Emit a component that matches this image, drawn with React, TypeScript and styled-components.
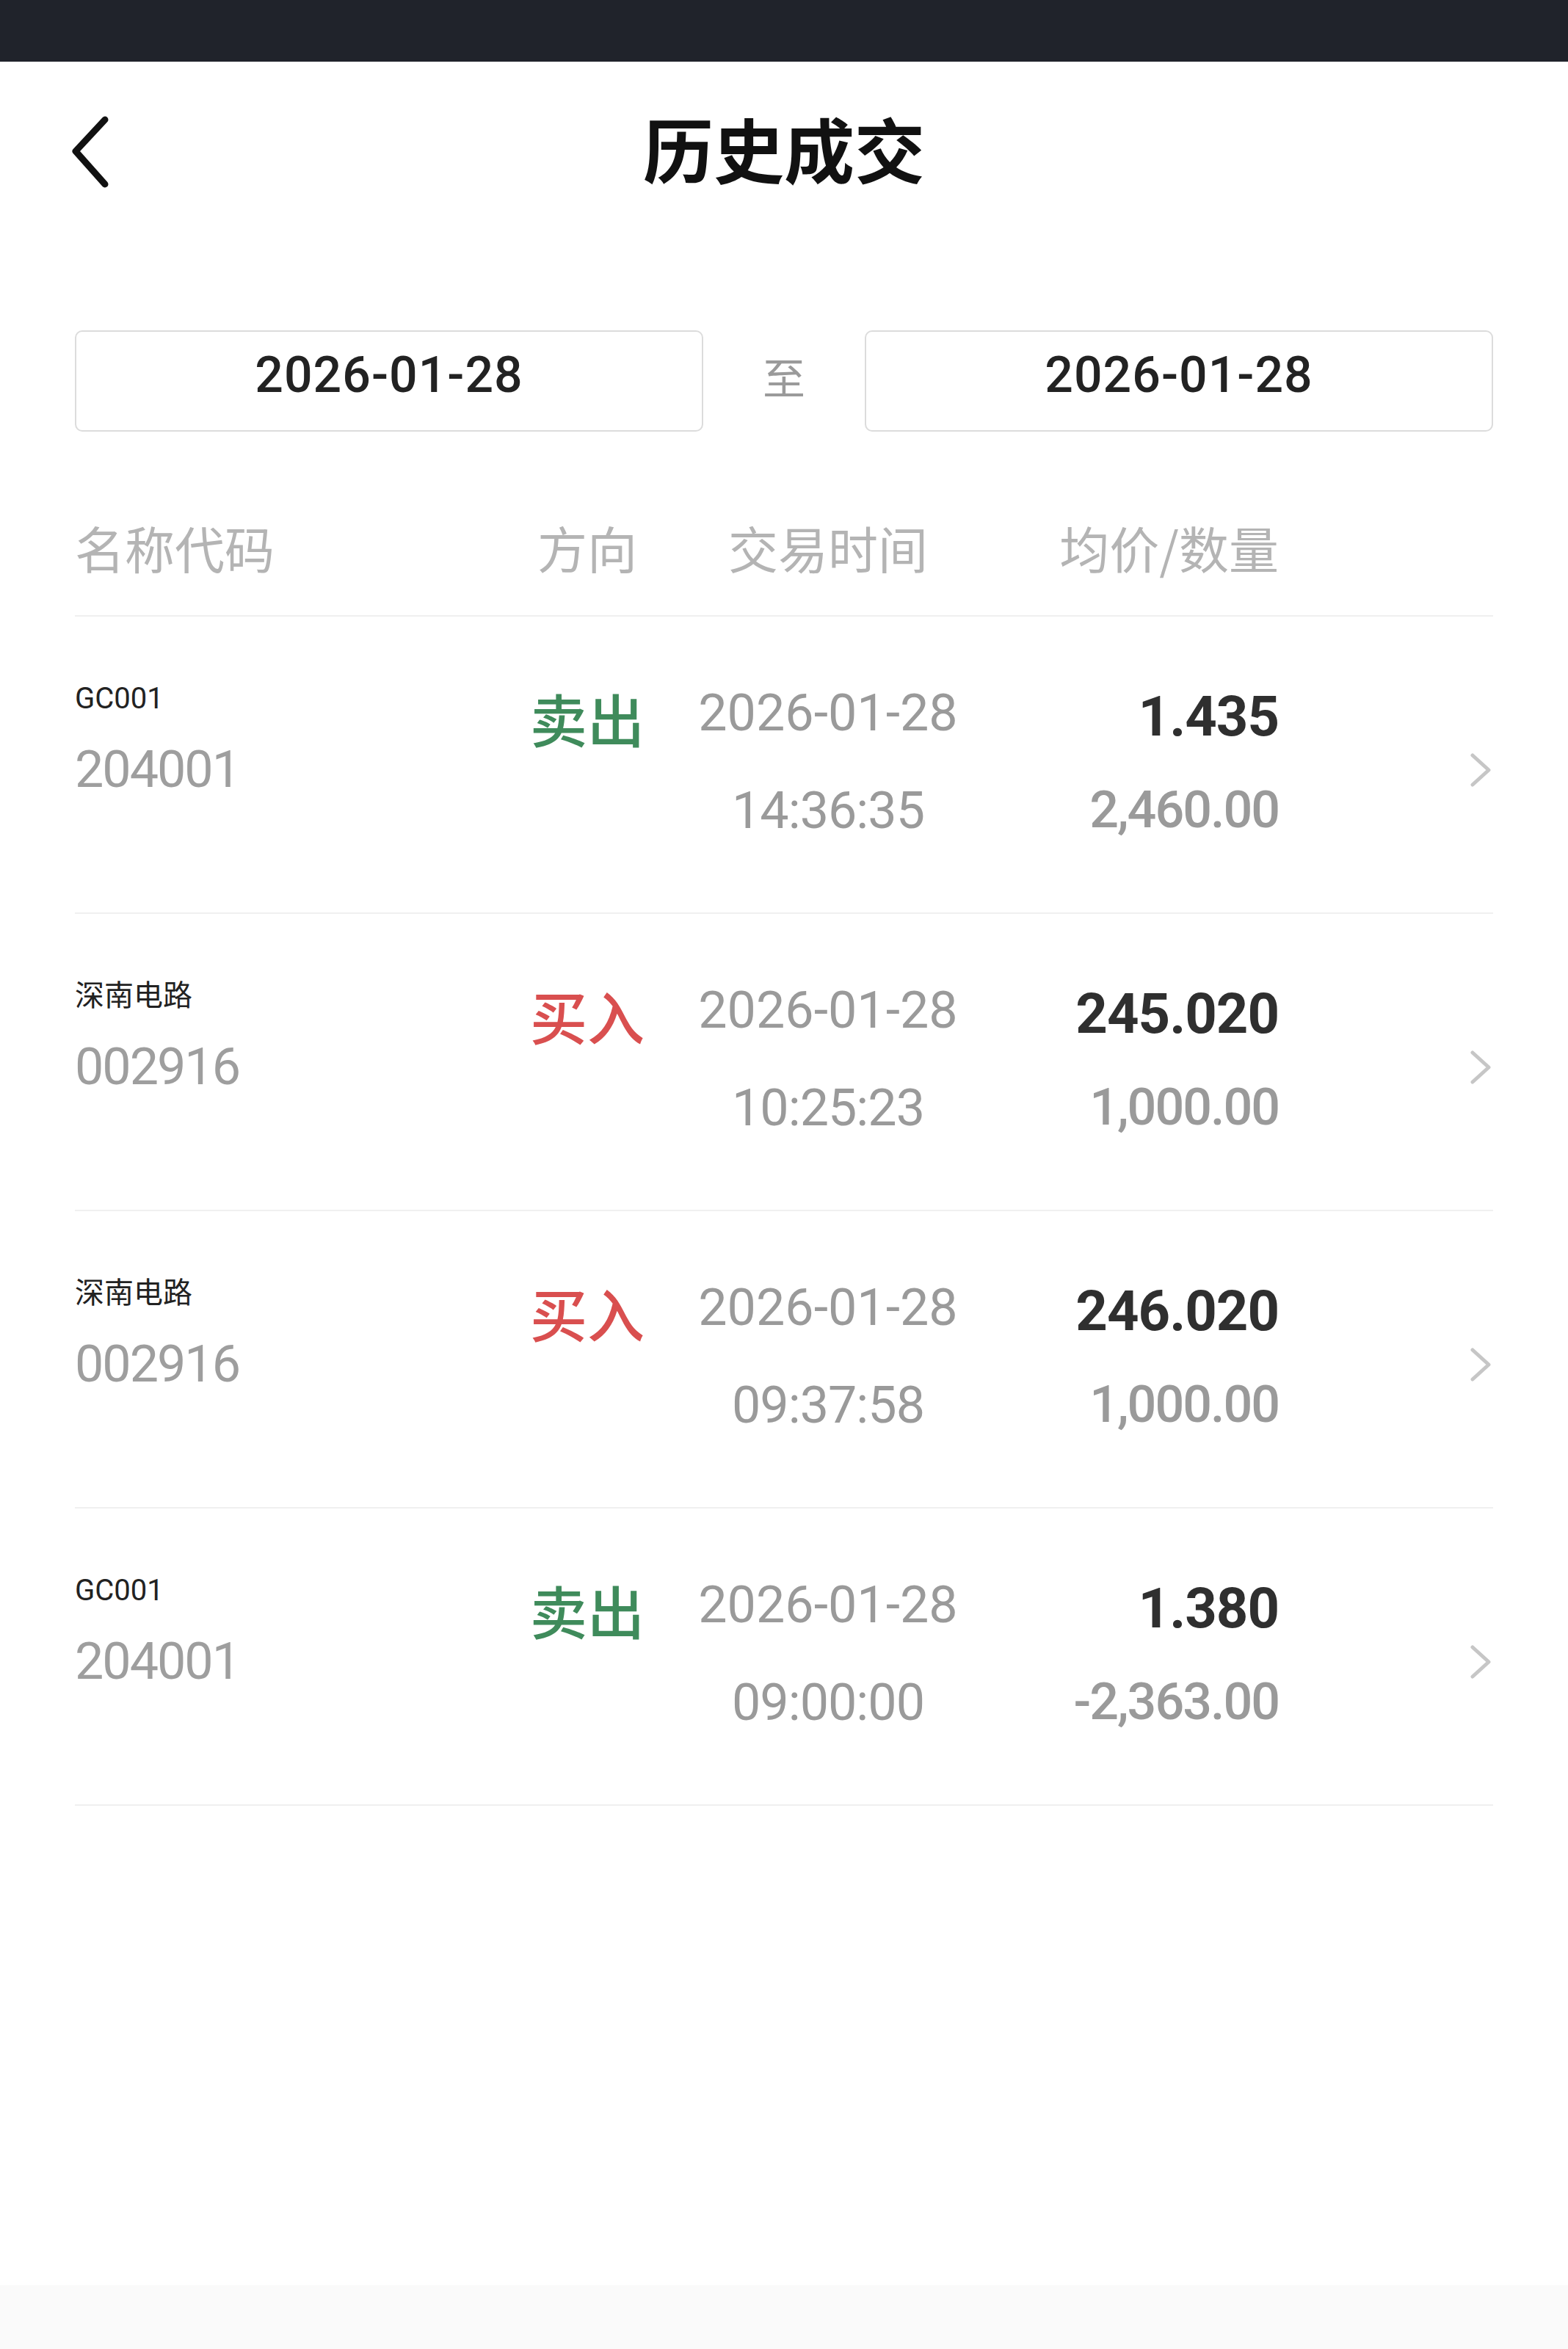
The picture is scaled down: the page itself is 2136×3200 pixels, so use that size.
import React from "react";
import styled, { createGlobalStyle } from "styled-components";

type Trade = {
  name: string
  code: string
  side: "buy" | "sell"
  date: string
  time: string
  price: string
  qty: string
}

const trades: Trade[] = [
  { name: "GC001", code: "204001", side: "sell", date: "2026-01-28", time: "14:36:35", price: "1.435", qty: "2,460.00" },
  { name: "深南电路", code: "002916", side: "buy", date: "2026-01-28", time: "10:25:23", price: "245.020", qty: "1,000.00" },
  { name: "深南电路", code: "002916", side: "buy", date: "2026-01-28", time: "09:37:58", price: "246.020", qty: "1,000.00" },
  { name: "GC001", code: "204001", side: "sell", date: "2026-01-28", time: "09:00:00", price: "1.380", qty: "-2,363.00" },
]

const NUM = `Roboto, "Noto Sans CJK SC", sans-serif`
const CJK = `"Noto Sans CJK SC", "Noto Sans", sans-serif`

const GlobalStyle = createGlobalStyle`
  html, body {
    margin: 0;
    padding: 0;
    background: #fff;
  }
  * { box-sizing: border-box; }
`

const Page = styled.div`
  width: 100%;
  min-height: 3200px;
  display: flex;
  flex-direction: column;
  background: #fff;
`

const StatusBar = styled.div`
  height: 84px;
  background: #20232b;
`

const NavBar = styled.div`
  height: 242px;
  display: grid;
  grid-template-columns: 1fr auto 1fr;
  align-items: center;
  padding: 0 93px;
`

const BackIcon = styled.svg`
  display: block;
  margin-top: 6px;
`

const Title = styled.h1`
  margin: 0;
  font-family: ${CJK};
  font-size: 96px;
  font-weight: 700;
  line-height: 1;
  color: #111;
  margin-top: -8px;
`

const DateRange = styled.div`
  margin-top: 124px;
  padding: 0 102px;
  display: grid;
  grid-template-columns: 1fr 220px 1fr;
  align-items: center;
`

const DateBox = styled.div`
  height: 138px;
  border: 2px solid #dcdcdc;
  border-radius: 10px;
  display: flex;
  align-items: center;
  justify-content: center;
  padding-bottom: 16px;
  font-family: ${NUM};
  font-size: 68px;
  font-weight: 500;
  letter-spacing: 1px;
  color: #222;
`

const To = styled.span`
  text-align: center;
  font-family: ${CJK};
  font-size: 58px;
  color: #9a9a9a;
  line-height: 1;
  margin-top: -14px;
`

const Table = styled.div`
  padding: 0 102px;
`

const Columns = `
  display: grid;
  grid-template-columns: 598px 200px 456px 386px 1fr;
  border-bottom: 2px solid #f0f0f0;
`

const HeaderRow = styled.div`
  ${Columns}
  height: 252px;
  padding-top: 74px;
  align-items: center;
  font-family: ${CJK};
  font-size: 68px;
  line-height: 1;
  color: #b4b4b4;
`

const HeadCell = styled.div<{ align?: "left" | "center" | "right" }>`
  text-align: ${({ align }) => align || "left"};
  margin-top: -8px;
`

const Row = styled.div`
  ${Columns}
  height: 405px;
  padding-top: 86px;
  align-items: start;
`

const NameCell = styled.div`
  display: flex;
  flex-direction: column;
`

const Name = styled.div`
  font-family: ${NUM};
  font-size: 40px;
  line-height: 52px;
  color: #222;
`

const Code = styled.div`
  margin-top: 30px;
  font-family: ${NUM};
  font-size: 70px;
  letter-spacing: -2px;
  line-height: 80px;
  color: #9e9e9e;
`

const Side = styled.div<{ side: "buy" | "sell" }>`
  margin-top: 2px;
  text-align: center;
  font-family: ${CJK};
  font-size: 78px;
  font-weight: 500;
  line-height: 100px;
  color: ${({ side }) => (side === "buy" ? "#d94f4f" : "#3f8b5b")};
`

const Stack = styled.div<{ align: "center" | "right" }>`
  margin-top: 10px;
  display: flex;
  flex-direction: column;
  align-items: ${({ align }) => (align === "right" ? "flex-end" : "center")};
  font-family: ${NUM};
`

const DateText = styled.div`
  font-size: 70px;
  line-height: 70px;
  color: #9a9a9a;
`

const TimeText = styled.div`
  margin-top: 63px;
  font-size: 70px;
  letter-spacing: -1px;
  line-height: 70px;
  color: #9a9a9a;
`

const Price = styled.div`
  font-size: 76px;
  font-weight: 700;
  letter-spacing: -1px;
  line-height: 80px;
  color: #2f2f2f;
`

const Qty = styled.div`
  margin-top: 52px;
  font-size: 70px;
  font-weight: 500;
  letter-spacing: -2px;
  line-height: 70px;
  color: #9a9a9a;
`

const ArrowCell = styled.div`
  display: flex;
  justify-content: flex-end;
  margin-top: 100px;
`

const Spacer = styled.div`
  flex: 1;
`

const BottomBar = styled.div`
  height: 87px;
  background: #fafafa;
`

function Chevron() {
  return (
    <svg width="34" height="46" viewBox="0 0 34 46" fill="none">
      <path d="M6 3 L28 23 L6 43" stroke="#c6c6c6" strokeWidth="5" strokeLinecap="round" strokeLinejoin="round" />
    </svg>
  )
}

export default function App() {
  return (
    <Page>
      <GlobalStyle />
      <StatusBar />
      <NavBar>
        <BackIcon width="60" height="110" viewBox="0 0 60 110" fill="none">
          <path d="M50 10 L10 53 L50 98" stroke="#111" strokeWidth="9" strokeLinecap="round" strokeLinejoin="round" />
        </BackIcon>
        <Title>历史成交</Title>
        <div />
      </NavBar>

      <DateRange>
        <DateBox>2026-01-28</DateBox>
        <To>至</To>
        <DateBox>2026-01-28</DateBox>
      </DateRange>

      <Table>
        <HeaderRow>
          <HeadCell>名称代码</HeadCell>
          <HeadCell align="center">方向</HeadCell>
          <HeadCell align="center">交易时间</HeadCell>
          <HeadCell align="right">均价/数量</HeadCell>
          <div />
        </HeaderRow>
        {trades.map((t, i) => (
          <Row key={i}>
            <NameCell>
              <Name>{t.name}</Name>
              <Code>{t.code}</Code>
            </NameCell>
            <Side side={t.side}>{t.side === "buy" ? "买入" : "卖出"}</Side>
            <Stack align="center">
              <DateText>{t.date}</DateText>
              <TimeText>{t.time}</TimeText>
            </Stack>
            <Stack align="right">
              <Price>{t.price}</Price>
              <Qty>{t.qty}</Qty>
            </Stack>
            <ArrowCell>
              <Chevron />
            </ArrowCell>
          </Row>
        ))}
      </Table>

      <Spacer />
      <BottomBar />
    </Page>
  );
}
